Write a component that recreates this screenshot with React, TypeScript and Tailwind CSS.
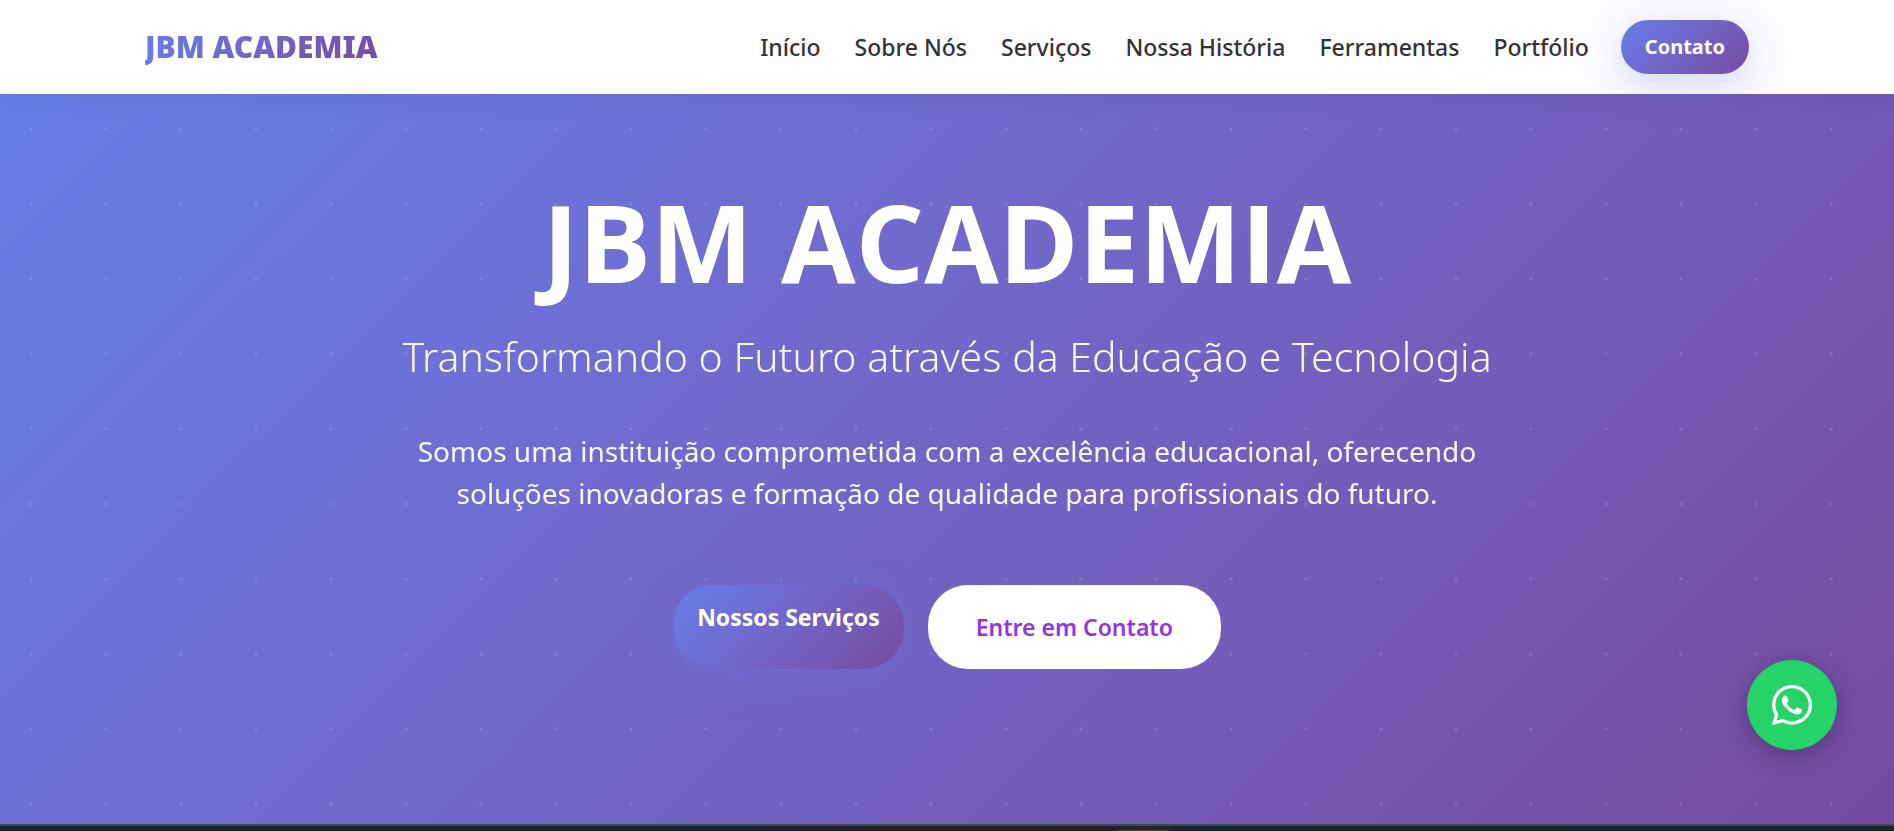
import React from 'react';
import { FaWhatsapp } from 'react-icons/fa';

interface NavItem {
  label: string;
  href: string;
}

const navItems: NavItem[] = [
  { label: 'Início', href: '#inicio' },
  { label: 'Sobre Nós', href: '#sobre' },
  { label: 'Serviços', href: '#servicos' },
  { label: 'Nossa História', href: '#historia' },
  { label: 'Ferramentas', href: '#ferramentas' },
  { label: 'Portfólio', href: '#portfolio' },
];

function Header() {
  return (
    <header className="relative z-10 bg-[#fdfcff] shadow-[0_2px_25px_rgba(0,0,0,0.07)]">
      <div className="max-w-[1604px] mx-auto h-[94px] flex items-center justify-between">
        <a
          href="#inicio"
          className="text-[30px] leading-9 font-black bg-linear-135 from-[#667eea] to-[#764ba2] bg-clip-text text-transparent"
        >
          JBM ACADEMIA
        </a>
        <div className="flex items-center gap-8">
          <nav className="flex items-center gap-[34px]">
            {navItems.map((item) => (
              <a key={item.href} href={item.href} className="text-[23px] leading-9 font-medium text-[#333333]">
                {item.label}
              </a>
            ))}
          </nav>
          <button
            type="button"
            className="h-[54px] px-6 rounded-[30px] bg-linear-135 from-[#667eea] to-[#764ba2] text-white text-[20px] font-bold shadow-[0_10px_38px_rgba(102,126,234,0.3)]"
          >
            Contato
          </button>
        </div>
      </div>
    </header>
  );
}

function Hero() {
  return (
    <section id="inicio" className="bg-linear-135 from-[#667eea] to-[#764ba2] text-white">
      <div className="h-[730px] px-6 pt-[88px] flex flex-col items-center text-center bg-[radial-gradient(circle_at_31px_35px,rgba(255,255,255,0.13)_1px,transparent_2px)] bg-size-[75px_75px]">
        <h1 className="font-['Open_Sans',sans-serif] text-[108px] leading-[120px] font-bold">JBM ACADEMIA</h1>
        <p className="mt-6 text-[41px] leading-[60px] font-light opacity-95">
          Transformando o Futuro através da Educação e Tecnologia
        </p>
        <p className="mt-11 max-w-[1120px] text-[28px] leading-[42px] opacity-95">
          Somos uma instituição comprometida com a excelência educacional, oferecendo soluções inovadoras e formação de
          qualidade para profissionais do futuro.
        </p>
        <div className="mt-[71px] flex gap-6">
          <a
            href="#servicos"
            className="h-[84px] px-6 pt-3 rounded-[40px] bg-linear-135 from-[#667eea] to-[#764ba2] text-[23px] leading-10 font-bold shadow-[0_10px_38px_rgba(102,126,234,0.3)]"
          >
            Nossos Serviços
          </a>
          <a
            href="#contato"
            className="h-[84px] px-12 flex items-center rounded-[40px] bg-white text-[#9333ea] text-[23px] leading-10 font-semibold"
          >
            Entre em Contato
          </a>
        </div>
      </div>
    </section>
  );
}

export default function App() {
  return (
    <div className="h-screen overflow-hidden font-['Noto_Sans','Open_Sans',sans-serif] bg-[#122734]">
      <Header />
      <main>
        <Hero />
        <section className="h-24 pt-1 border-t-2 border-[#3d4a50] bg-linear-to-r from-[#122734] from-40% via-[#241f26] via-50% to-[#122734] to-65%">
          <div className="ml-[59%] w-[53px] h-1 rounded-full bg-[#4a4a4d]" />
        </section>
      </main>
      <a
        href="https://wa.me/"
        aria-label="WhatsApp"
        className="fixed right-[57px] bottom-[81px] z-20 size-[90px] rounded-full bg-[#25d366] text-white flex items-center justify-center shadow-[0_5px_25px_rgba(0,0,0,0.3)]"
      >
        <FaWhatsapp className="size-[46px]" />
      </a>
    </div>
  );
}
